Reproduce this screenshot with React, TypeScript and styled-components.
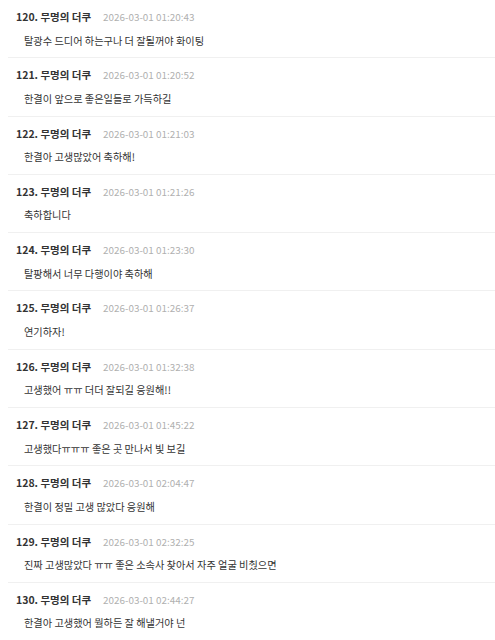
import React from "react";
import styled, { createGlobalStyle } from "styled-components";

const Global = createGlobalStyle`
  html, body { margin: 0; padding: 0; background: #fff; }
  body { font-family: "Noto Sans CJK KR", "Noto Sans", sans-serif; }
`;

const List = styled.ul`
  list-style: none;
  margin: 0;
  padding: 0 0 0 8px;
`;

const Item = styled.li`
  padding: 10px 8px 7.8px 8px;
  border-bottom: 1px solid #f0f0f0;
  &:last-child { border-bottom: none; }
`;

const Head = styled.div`
  display: flex;
  align-items: baseline;
  gap: 12px;
  height: 14px;
  line-height: 14px;
`;

const Name = styled.span`
  font-size: 10.5px;
  font-weight: 700;
  color: #333;
`;

const Date = styled.span`
  font-size: 9.9px;
  color: #b0b0b0;
`;

const Body = styled.div`
  margin-top: 7.5px;
  padding-left: 8px;
  font-size: 10.2px;
  line-height: 18px;
  color: #333;
`;

const data: [number, string, string][] = [
  [120, "2026-03-01 01:20:43", "탈광수 드디어 하는구나 더 잘될꺼야 화이팅"],
  [121, "2026-03-01 01:20:52", "한결이 앞으로 좋은일들로 가득하길"],
  [122, "2026-03-01 01:21:03", "한결아 고생많았어 축하해!"],
  [123, "2026-03-01 01:21:26", "축하합니다"],
  [124, "2026-03-01 01:23:30", "탈팡해서 너무 다행이야 축하해"],
  [125, "2026-03-01 01:26:37", "연기하자!"],
  [126, "2026-03-01 01:32:38", "고생했어 ㅠㅠ 더더 잘되길 응원해!!"],
  [127, "2026-03-01 01:45:22", "고생했다ㅠㅠㅠ 좋은 곳 만나서 빛 보길"],
  [128, "2026-03-01 02:04:47", "한결이 정밀 고생 많았다 응원해"],
  [129, "2026-03-01 02:32:25", "진짜 고생많았다 ㅠㅠ 좋은 소속사 찾아서 자주 얼굴 비췄으면"],
  [130, "2026-03-01 02:44:27", "한결아 고생했어 뭘하든 잘 해낼거야 넌"],
];

export default function App() {
  return (
    <>
      <Global />
      <List>
        {data.map(([n, d, t]) => (
          <Item key={n}>
            <Head>
              <Name>{n}. 무명의 더쿠</Name>
              <Date>{d}</Date>
            </Head>
            <Body>{t}</Body>
          </Item>
        ))}
      </List>
    </>
  );
}
